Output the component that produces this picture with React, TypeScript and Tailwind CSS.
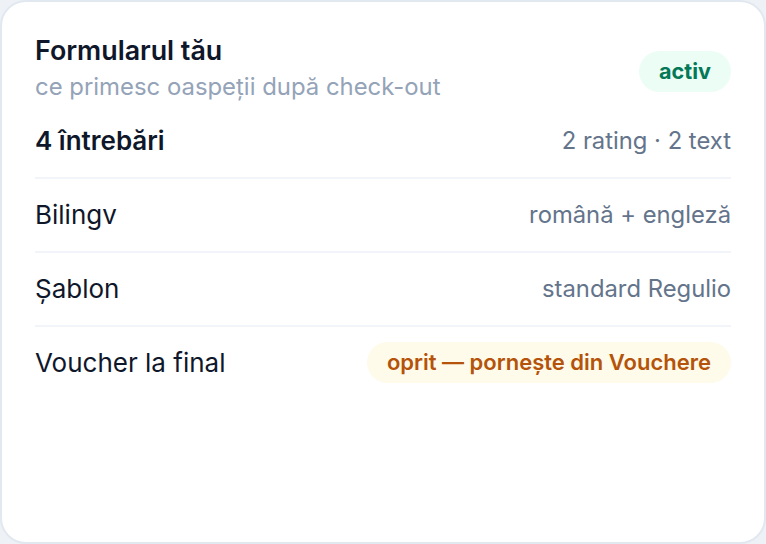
import React from "react";

interface RowProps {
  label: string;
  children: React.ReactNode;
  bold?: boolean;
  last?: boolean;
}

const Row: React.FC<RowProps> = ({ label, children, bold, last }) => (
  <div
    className={`flex items-center justify-between ${last ? "py-[15px]" : "py-[18px] border-b-2 border-[#f1f5f9]"}`}
  >
    <span className={`text-[26px] leading-9 text-[#0f172a] ${bold ? "font-semibold" : ""}`}>{label}</span>
    {children}
  </div>
);

const Muted: React.FC<{ children: React.ReactNode }> = ({ children }) => (
  <span className="text-[23.8px] leading-9 text-[#64748b]">{children}</span>
);

export default function App() {
  return (
    <main
      className="w-[766px] h-[544px] bg-[#eef2f7]"
      style={{ fontFamily: "Inter, 'Noto Sans', sans-serif" }}
    >
      <section className="w-full h-full bg-white border-2 border-[#e2e8f0] rounded-[26px] px-[33px] pt-[32px]">
        <header className="flex items-center justify-between">
          <div>
            <h1 className="text-[26.8px] leading-8 font-semibold text-[#0f172a]">Formularul tău</h1>
            <p className="text-[23.9px] leading-8 text-[#94a3b8] mt-[5px]">ce primesc oaspeții după check-out</p>
          </div>
          <span className="mt-[6px] px-5 h-[41px] flex items-center rounded-full bg-[#ecfdf5] text-[#047857] text-[21.6px] font-bold">
            activ
          </span>
        </header>
        <div className="mt-[2px]">
          <Row label="4 întrebări" bold>
            <Muted>2 rating · 2 text</Muted>
          </Row>
          <Row label="Bilingv">
            <Muted>română + engleză</Muted>
          </Row>
          <Row label="Șablon">
            <Muted>standard Regulio</Muted>
          </Row>
          <Row label="Voucher la final" last>
            <span className="px-5 h-[41px] flex items-center rounded-full bg-[#fefbeb] text-[#b45309] text-[22px] font-semibold">
              oprit — pornește din Vouchere
            </span>
          </Row>
        </div>
      </section>
    </main>
  );
}
